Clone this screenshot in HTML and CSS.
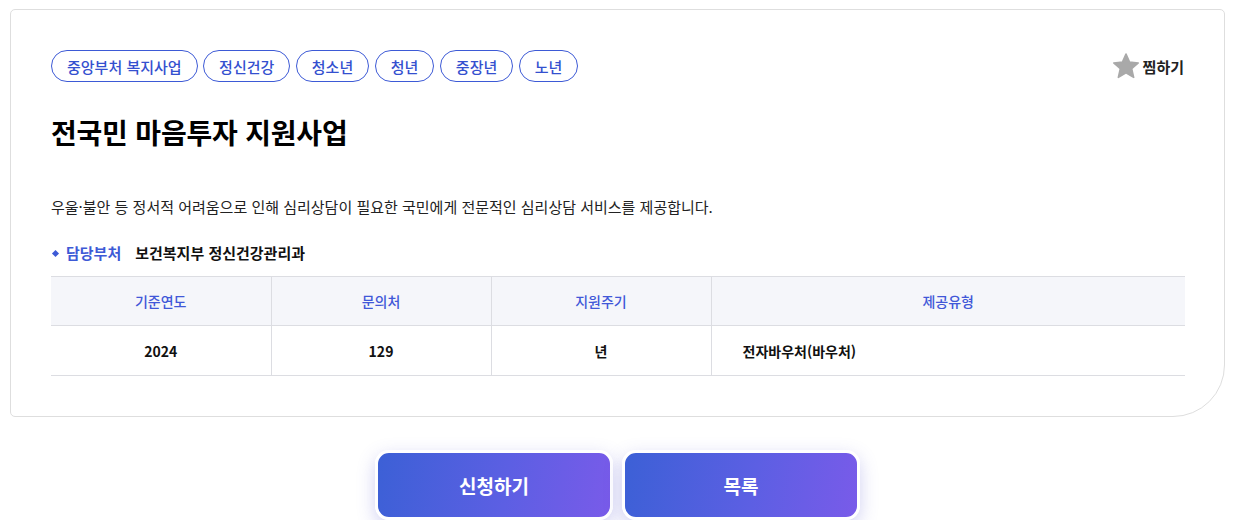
FILE: index.html
```html
<!DOCTYPE html>
<html lang="ko">
<head>
<meta charset="utf-8">
<title>전국민 마음투자 지원사업</title>
<link rel="stylesheet" href="styles.css">
</head>
<body>
<div class="page">
  <section class="card">
    <div class="top-row">
      <ul class="tags">
        <li class="tag">중앙부처 복지사업</li>
        <li class="tag">정신건강</li>
        <li class="tag">청소년</li>
        <li class="tag">청년</li>
        <li class="tag">중장년</li>
        <li class="tag">노년</li>
      </ul>
      <button class="fav" type="button">
        <svg class="star" width="28" height="28" viewBox="0 0 24 24" aria-hidden="true"><path d="M12 1.8l3.05 6.9 7.45.7-5.65 4.95 1.7 7.35L12 17.85l-6.55 3.85 1.7-7.35L1.5 9.4l7.45-.7z" fill="#a9a9a9" stroke="#a9a9a9" stroke-width="1.4" stroke-linejoin="round"/></svg>
        <span>찜하기</span>
      </button>
    </div>
    <h1 class="title">전국민 마음투자 지원사업</h1>
    <p class="desc">우울·불안 등 정서적 어려움으로 인해 심리상담이 필요한 국민에게 전문적인 심리상담 서비스를 제공합니다.</p>
    <div class="dept">
      <span class="bullet"></span>
      <span class="dept-label">담당부처</span>
      <span class="dept-value">보건복지부 정신건강관리과</span>
    </div>
    <table class="info">
      <thead>
        <tr>
          <th class="c1">기준연도</th>
          <th class="c2">문의처</th>
          <th class="c3">지원주기</th>
          <th class="c4">제공유형</th>
        </tr>
      </thead>
      <tbody>
        <tr>
          <td>2024</td>
          <td>129</td>
          <td>년</td>
          <td class="left">전자바우처(바우처)</td>
        </tr>
      </tbody>
    </table>
  </section>
  <div class="actions">
    <button class="btn" type="button">신청하기</button>
    <button class="btn" type="button">목록</button>
  </div>
</div>
</body>
</html>
```
FILE: styles.css
```css
* { box-sizing: border-box; }
html, body { margin: 0; padding: 0; background: #fff; }
body {
  font-family: "Noto Sans CJK KR", "Noto Sans", sans-serif;
  color: #111;
}
.page { padding: 9px 11px 0 10px; }
.card {
  border: 1px solid #dedede;
  border-radius: 5px 5px 52px 5px;
  padding: 40px 39px 40px 40px;
  background: #fff;
}
.top-row {
  display: flex;
  justify-content: space-between;
  align-items: center;
}
.tags {
  list-style: none;
  margin: 0;
  padding: 0;
  display: flex;
  gap: 5.5px;
}
.tag {
  height: 32px;
  padding: 0 15px;
  border: 1px solid #3d5ad6;
  border-radius: 16px;
  color: #3450cf;
  font-size: 15px;
  font-weight: 500;
  display: flex;
  align-items: center;
}
.fav {
  border: 0;
  background: none;
  padding: 0 1px 0 0;
  display: flex;
  align-items: center;
  gap: 3px;
  font-family: inherit;
  font-size: 15px;
  font-weight: 700;
  color: #222;
  cursor: pointer;
}
.star { display: block; }
.title {
  margin: 30px 0 0;
  font-size: 28px;
  font-weight: 700;
  line-height: 40px;
  letter-spacing: -0.2px;
  color: #000;
}
.desc {
  margin: 44px 0 0;
  font-size: 15px;
  line-height: 22px;
  color: #222;
}
.dept {
  margin-top: 24px;
  display: flex;
  align-items: center;
  font-size: 15px;
  font-weight: 700;
  line-height: 22px;
}
.bullet {
  width: 5px;
  height: 5px;
  background: #3d5ad6;
  transform: rotate(45deg);
  margin: 0 8px 0 2px;
}
.dept-label { color: #3d5ad6; margin-right: 14px; }
.dept-value { color: #111; }
.info {
  margin-top: 12px;
  width: 100%;
  border-collapse: collapse;
  table-layout: fixed;
  font-size: 14px;
}
.info th, .info td {
  border-top: 1px solid #dcdde2;
  border-bottom: 1px solid #dcdde2;
  text-align: center;
}
.info th + th, .info td + td { border-left: 1px solid #dcdde2; }
.info th {
  height: 49px;
  background: #f5f6fa;
  color: #4158d8;
  font-weight: 500;
}
.info td {
  height: 50px;
  color: #111;
  font-weight: 700;
}
.info td.left { text-align: left; padding-left: 31px; }
.c1, .c2, .c3 { width: 220px; }
.actions {
  display: flex;
  justify-content: center;
  gap: 9px;
  margin-top: 33px;
}
.btn {
  width: 238px;
  height: 70px;
  border: 3px solid #fff;
  border-radius: 14px;
  background: linear-gradient(100deg, #3c60d6 0%, #5c5fe3 55%, #795be9 100%);
  color: #fff;
  font-family: inherit;
  font-size: 19px;
  font-weight: 700;
  box-shadow: 0 6px 18px rgba(90, 90, 210, 0.28);
  cursor: pointer;
}
```
